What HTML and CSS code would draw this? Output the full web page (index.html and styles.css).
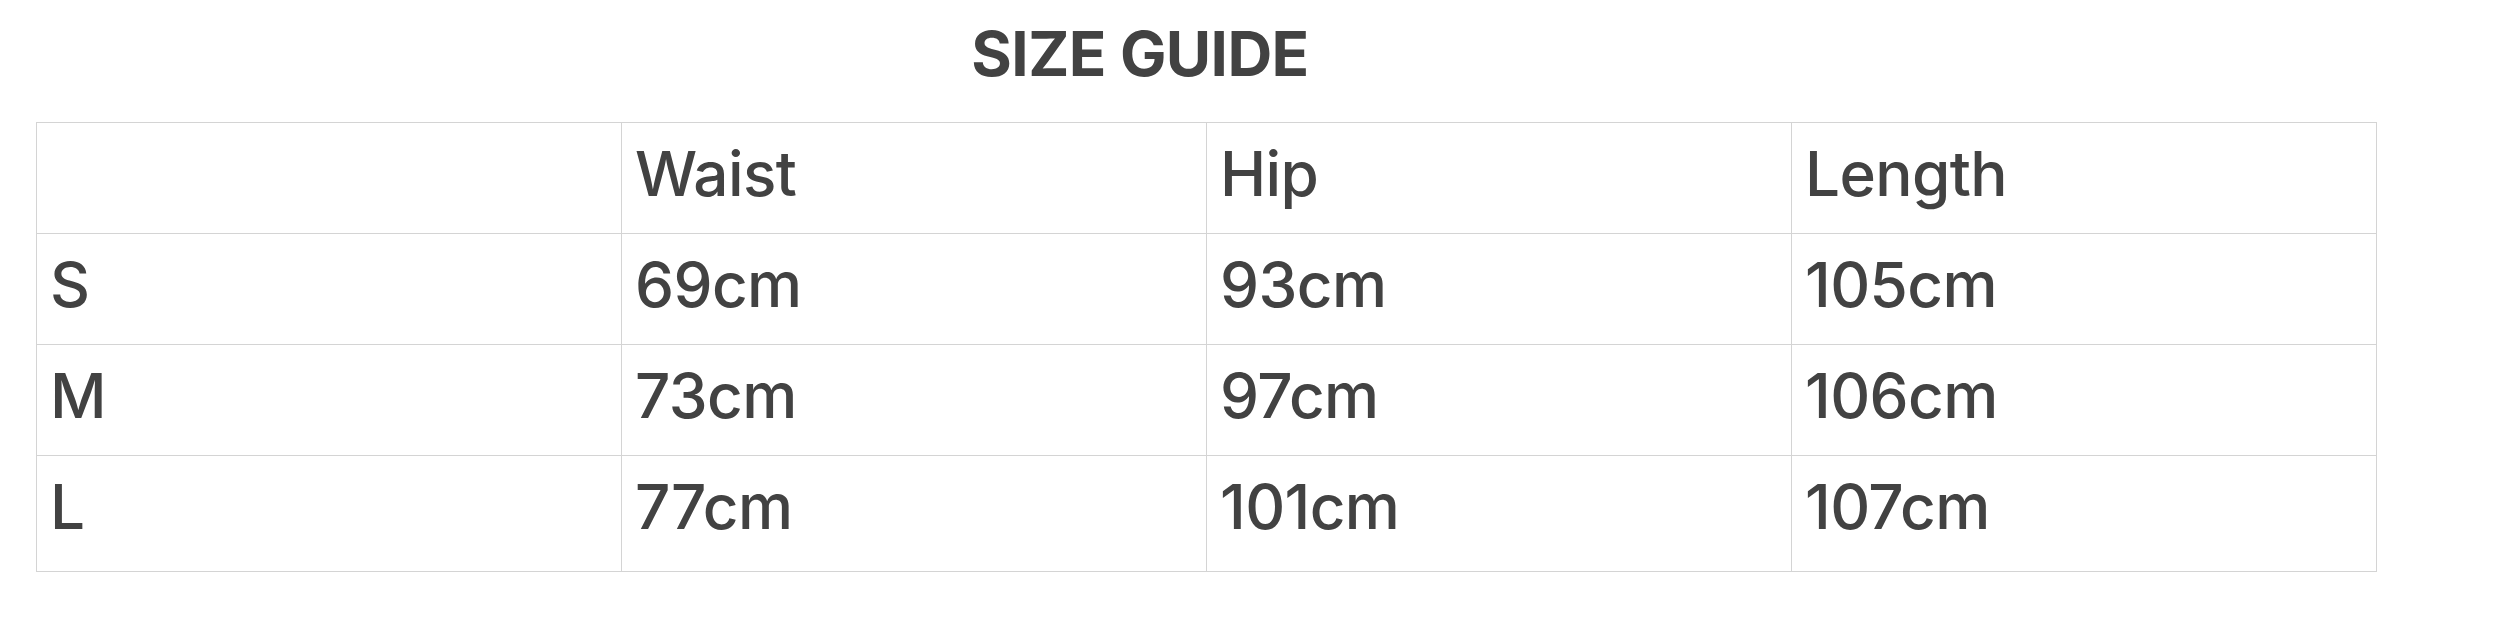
FILE: index.html
```html
<!DOCTYPE html>
<html lang="en">
<head>
<meta charset="utf-8">
<title>Size Guide</title>
<link rel="stylesheet" href="styles.css">
</head>
<body>
<div class="page">
  <h2 class="title">SIZE GUIDE</h2>
  <table class="sizes">
    <colgroup>
      <col class="col"><col class="col"><col class="col"><col class="col">
    </colgroup>
    <tr><td></td><td>Waist</td><td>Hip</td><td>Length</td></tr>
    <tr><td>S</td><td>69cm</td><td>93cm</td><td>105cm</td></tr>
    <tr><td>M</td><td>73cm</td><td>97cm</td><td>106cm</td></tr>
    <tr class="last"><td>L</td><td>77cm</td><td>101cm</td><td>107cm</td></tr>
  </table>
</div>
</body>
</html>
```
FILE: styles.css
```css
html, body {
  margin: 0;
  padding: 0;
  background: #ffffff;
}
.page {
  padding: 18px 0 0 36px;
  font-family: Inter, Roboto, "Liberation Sans", Arial, sans-serif;
  color: #424242;
}
.title {
  margin: 0;
  width: 2208px;
  text-align: center;
  font-size: 62px;
  line-height: 72px;
  font-weight: 700;
  letter-spacing: -0.6px;
}
.sizes {
  margin-top: 32px;
  border-collapse: collapse;
  table-layout: fixed;
  width: 2340px;
}
.col { width: 585px; }
.sizes td {
  border: 1px solid #d4d4d4;
  padding: 15px 13px 23px;
  font-size: 62px;
  line-height: 72px;
  height: 72px;
  font-weight: 500;
  letter-spacing: -0.6px;
  vertical-align: top;
  white-space: nowrap;
}
.sizes tr.last td {
  padding-bottom: 28px;
}
```
